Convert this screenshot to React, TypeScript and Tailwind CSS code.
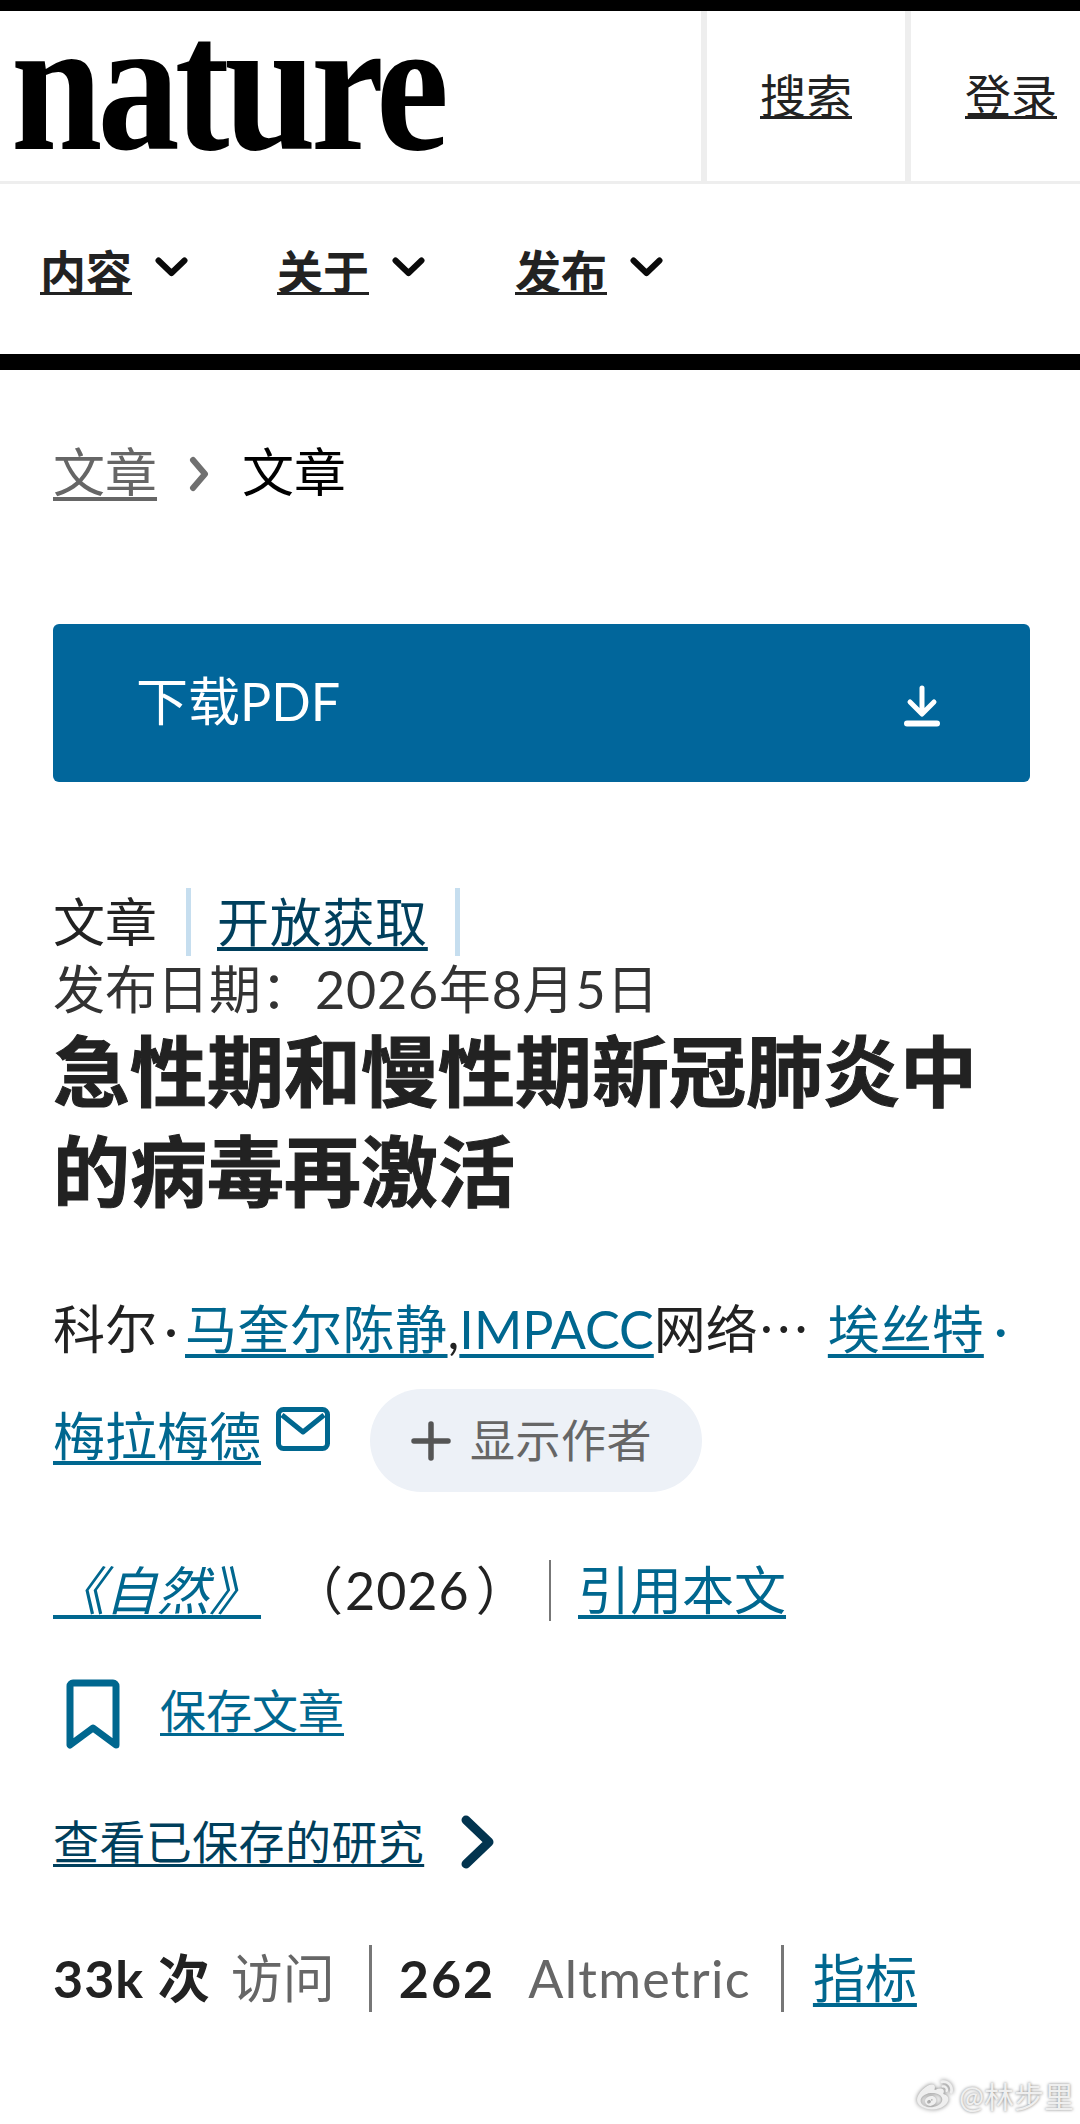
import React from "react";
import { FaWeibo } from "react-icons/fa";

const Chev = () => (
  <svg width="33" height="20" viewBox="0 0 33 20" className="shrink-0 mb-[10px]" fill="none">
    <path d="M3.5 3.5 L16.5 16 L29.5 3.5" stroke="#0a0a0a" strokeWidth="6" strokeLinecap="round" strokeLinejoin="round" />
  </svg>
);

const NavItem = ({ label, w }: { label: string; w: string }) => (
  <div className={`flex items-center gap-[23px] ${w}`}>
    <span className="text-[46px] leading-[56px] font-bold text-[#222] underline decoration-[3px] underline-offset-[3px] [text-decoration-skip-ink:none]">{label}</span>
    <Chev />
  </div>
);

const link = "text-[#00678f] underline decoration-[4px] underline-offset-[5px] [text-decoration-skip-ink:none] whitespace-nowrap";

export default function App() {
  return (
    <div className="relative w-[1080px] h-[2124px] overflow-hidden bg-white text-[#222] font-['Lato','Noto_Sans_CJK_SC',sans-serif]">
      <header className="border-t-[11px] border-black">
        <div className="flex h-[173px] border-b-[3px] border-[#eeeeee]">
          <div className="flex-1 min-w-0 pl-[11px]">
            <span className="block origin-top-left scale-x-[0.865] font-['Liberation_Serif',serif] font-bold text-[190px] leading-[170px] tracking-[-0.03em] text-black -mt-[11px]">nature</span>
          </div>
          <div className="w-[204px] border-l-[6px] border-[#eeeeee] flex items-center justify-center">
            <span className="text-[46px] leading-[56px] text-[#222] underline decoration-[3px] underline-offset-[3px] [text-decoration-skip-ink:none]">搜索</span>
          </div>
          <div className="w-[175px] border-l-[6px] border-[#eeeeee] flex items-center pl-[54px]">
            <span className="text-[46px] leading-[56px] text-[#222] underline decoration-[3px] underline-offset-[3px] [text-decoration-skip-ink:none] whitespace-nowrap">登录</span>
          </div>
        </div>
        <nav className="flex items-center h-[170px] pl-[40px] pt-[6px] box-border border-b-0">
          <NavItem label="内容" w="w-[237px]" />
          <NavItem label="关于" w="w-[238px]" />
          <NavItem label="发布" w="w-[200px]" />
        </nav>
        <div className="h-[16px] bg-black" />
      </header>

      <main className="pl-[53px] pr-[50px]">
        <div className="flex items-center mt-[72px] h-[60px] text-[52px] leading-[60px]">
          <span className="text-[#666] underline decoration-[4px] underline-offset-[5px] [text-decoration-skip-ink:none]">文章</span>
          <svg width="24" height="36" viewBox="0 0 24 36" className="ml-[31px] mr-[30px] mt-[4px] shrink-0" fill="none">
            <path d="M5 4 L17 18 L5 32" stroke="#707070" strokeWidth="6" strokeLinecap="round" strokeLinejoin="round" />
          </svg>
          <span className="text-black">文章</span>
        </div>

        <div className="mt-[122px] h-[158px] bg-[#01669b] rounded-[6px] flex items-center justify-between pl-[83px] pr-[90px] text-white">
          <span className="text-[52px] leading-[60px] -mt-[4px]">下载PDF</span>
          <svg width="36" height="42" viewBox="0 0 36 42" className="mt-[6px]" fill="none">
            <path d="M18 3 V27 M6 17 L18 29 L30 17" stroke="#fff" strokeWidth="5" strokeLinecap="round" strokeLinejoin="round" />
            <path d="M3 38.5 H33" stroke="#fff" strokeWidth="6" strokeLinecap="round" />
          </svg>
        </div>

        <div className="flex items-center mt-[106px] h-[68px] text-[52px] leading-[68px]">
          <span className="w-[133px]">文章</span>
          <span className="w-[5px] h-[68px] bg-[#c6deef]" />
          <span className="ml-[26px] text-[#003f5c] tracking-[0.7px] underline decoration-[4px] underline-offset-[5px] [text-decoration-skip-ink:none]">开放获取</span>
          <span className="ml-[27px] w-[5px] h-[68px] bg-[#c6deef]" />
        </div>
        <div className="mt-[2px] text-[52px] leading-[62px] text-[#333] whitespace-nowrap">发布日期：<span className="ml-[2px] tracking-[0.8px]">2026年8月5日</span></div>
        <h1 className="mt-[1px] text-[77px] leading-[100px] font-bold [-webkit-text-stroke:1px_#222] text-[#222]">急性期和慢性期新冠肺炎中<br />的病毒再激活</h1>

        <div className="mt-[78px] text-[52px] leading-[60px] whitespace-nowrap h-[60px] text-[#222]">
          科尔<span className="inline-block w-[28px] text-center">·</span><a className={`${link} tracking-[0.5px]`}>马奎尔陈静</a>,<a className={link}>IMPACC</a>网络⋯<a className={`${link} ml-[18px]`}>埃丝特<span className="inline-block w-[34px] text-center">·</span></a>
        </div>
        <div className="flex items-center mt-[30px] h-[103px]">
          <a className={`text-[52px] leading-[60px] mb-[10px] ${link}`}>梅拉梅德</a>
          <svg width="54" height="44" viewBox="0 0 54 44" className="ml-[15px] -mt-[24px] shrink-0" fill="none">
            <rect x="2.5" y="2.5" width="49" height="39" rx="5" stroke="#00678f" strokeWidth="5" />
            <path d="M6 8 L27 25 L48 8" stroke="#00678f" strokeWidth="5" strokeLinejoin="round" />
          </svg>
          <div className="ml-[40px] w-[332px] h-[103px] rounded-full bg-[#edf1f7] flex items-center pl-[41px] gap-[19px]">
            <svg width="40" height="40" viewBox="0 0 40 40" fill="none" className="shrink-0">
              <path d="M20 3 V37 M3 20 H37" stroke="#555" strokeWidth="5.5" strokeLinecap="round" />
            </svg>
            <span className="text-[45px] leading-[56px] text-[#666] whitespace-nowrap tracking-[0.5px]">显示作者</span>
          </div>
        </div>

        <div className="flex items-center mt-[68px] h-[61px] text-[52px] leading-[61px]">
          <a className={`w-[211px] italic ${link}`}>《自然》</a>
          <span className="ml-[27px] w-[258px] whitespace-nowrap">（<span className="ml-[2px] mr-[6px] tracking-[1px]">2026</span>）</span>
          <span className="w-[2px] h-[61px] bg-[#777]" />
          <a className={`ml-[27px] ${link}`}>引用本文</a>
        </div>

        <div className="flex items-center mt-[58px] h-[72px] pl-[12px]">
          <svg width="56" height="72" viewBox="0 0 56 72" fill="none" className="shrink-0">
            <path d="M5 7 a3 3 0 0 1 3 -3 H48 a3 3 0 0 1 3 3 V66 L28 49 L5 66 Z" stroke="#00678f" strokeWidth="7" strokeLinejoin="round" />
          </svg>
          <a className="ml-[39px] text-[46px] leading-[56px] text-[#00678f] underline decoration-[3px] underline-offset-[5px] [text-decoration-skip-ink:none] whitespace-nowrap -mt-[8px]">保存文章</a>
        </div>

        <div className="flex items-center mt-[63px] h-[56px]">
          <a className="text-[46px] leading-[52px] tracking-[0.4px] text-[#003f5c] underline decoration-[3px] underline-offset-[5px] [text-decoration-skip-ink:none] whitespace-nowrap">查看已保存的研究</a>
          <svg width="36" height="56" viewBox="0 0 36 56" fill="none" className="ml-[36px] shrink-0">
            <path d="M6 6 L29 28 L6 50" stroke="#02344f" strokeWidth="9" strokeLinecap="round" strokeLinejoin="round" />
          </svg>
        </div>

        <div className="flex items-center mt-[75px] h-[67px] text-[52px] leading-[67px] whitespace-nowrap">
          <span className="font-bold text-[#222] tracking-[1px]">33k 次</span>
          <span className="ml-[20px] text-[#666]">访问</span>
          <span className="ml-[34px] w-[3px] h-[67px] bg-[#777]" />
          <span className="ml-[27px] font-bold text-[#222] tracking-[2px]">262</span>
          <span className="ml-[33px] text-[#666] tracking-[1.3px]">Altmetric</span>
          <span className="ml-[30px] w-[3px] h-[67px] bg-[#777]" />
          <a className={`ml-[29px] ${link}`}>指标</a>
        </div>
      </main>

      <div className="absolute left-[914px] top-[2078px] flex items-center gap-[3px] text-[#efefef]">
        <FaWeibo className="w-[42px] h-[36px] [filter:drop-shadow(0_0_2px_#777)]" />
        <span className="text-[30px] leading-[36px] whitespace-nowrap [text-shadow:0_0_3px_#777]">@林步里</span>
      </div>
    </div>
  );
}
